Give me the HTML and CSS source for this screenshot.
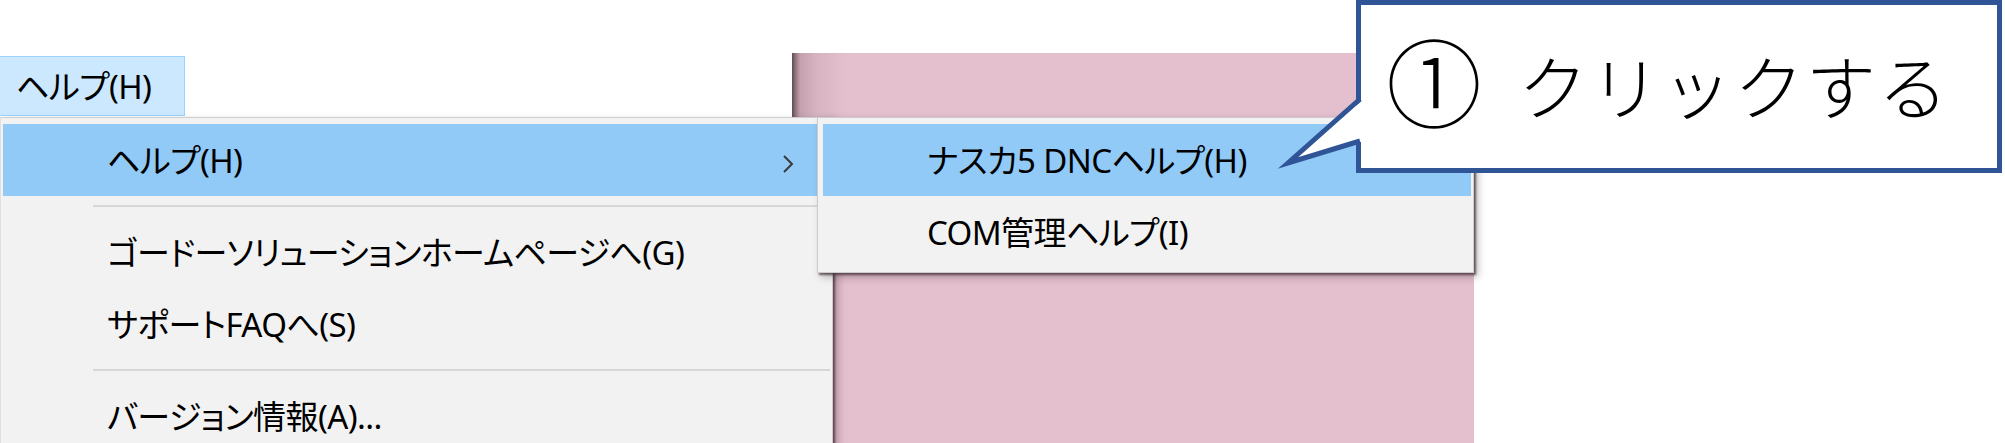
FILE: index.html
```html
<!DOCTYPE html>
<html lang="ja">
<head>
<meta charset="utf-8">
<title>ヘルプメニュー</title>
<link rel="stylesheet" href="styles.css">
</head>
<body>
<div class="screen">
  <div class="menubar">
    <div class="menubar-item">ヘルプ(H)</div>
  </div>

  <div class="window"></div>

  <div class="menu dropdown">
    <div class="item active">
      <span class="label">ヘルプ(H)</span>
      <svg class="chev" width="14" height="20" viewBox="0 0 14 20"><path d="M3 2 L11 10 L3 18" fill="none" stroke="#3a3a3a" stroke-width="2"/></svg>
    </div>
    <div class="sep"><div class="sep-line"></div></div>
    <div class="item"><span class="label">ゴードーソリューションホームページへ(G)</span></div>
    <div class="item"><span class="label">サポートFAQへ(S)</span></div>
    <div class="sep"><div class="sep-line"></div></div>
    <div class="item"><span class="label">バージョン情報(A)...</span></div>
  </div>

  <div class="menu submenu">
    <div class="item active">
      <span class="label">ナスカ5 DNCヘルプ(H)</span>
    </div>
    <div class="item"><span class="label">COM管理ヘルプ(I)</span></div>
  </div>

  <div class="callout">
    <div class="callout-box">
      <span class="num">①</span><span class="msg">クリックする</span>
    </div>
    <svg class="tail" width="100" height="90" viewBox="1270 88 100 90">
      <polygon points="1364,99 1288,163 1364,141" fill="#ffffff"/>
      <polyline points="1360,99 1288,163 1360,141" fill="none" stroke="#2f5597" stroke-width="5" stroke-linejoin="miter" stroke-miterlimit="10"/>
    </svg>
  </div>
</div>
</body>
</html>
```

FILE: styles.css
```css
* {
  box-sizing: border-box;
  margin: 0;
  padding: 0;
}

html, body {
  width: 2005px;
  height: 443px;
  overflow: hidden;
  background: #ffffff;
}

body {
  font-family: "Noto Sans", "Noto Sans CJK JP", sans-serif;
  color: #000000;
}

.screen {
  position: relative;
  width: 2005px;
  height: 443px;
  overflow: hidden;
}

.menubar {
  display: flex;
  padding-top: 56px;
}

.menubar-item {
  width: 185px;
  height: 60px;
  background: #cce8ff;
  border: 1px solid #99d1ff;
  border-left: none;
  display: flex;
  align-items: center;
  padding-left: 16px;
  font-size: 33px;
  font-feature-settings: "palt";
  line-height: 1;
  letter-spacing: -0.6px;
}

.window {
  position: absolute;
  left: 792px;
  top: 53px;
  width: 682px;
  height: 400px;
  background: linear-gradient(to right, #5e4a52 0, #8a6e78 3px, #c4a0ae 8px, #d8b3c2 25px, #e4bfcd 55px);
}

.menu {
  position: absolute;
  background: #f2f2f2;
  border: 1px solid #cccccc;
  box-shadow: 2px 2px 2px rgba(70, 45, 55, 0.75), 4px 4px 8px rgba(0, 0, 0, 0.25);
}

.dropdown {
  left: 0;
  top: 117px;
  width: 833px;
  height: 345px;
  padding: 6px 2px 0 2px;
  border-left-color: #e0e0e0;
}

.submenu {
  left: 817px;
  top: 117px;
  width: 657px;
  height: 156px;
  padding: 6px 2px 4px 5px;
}

.item {
  height: 72px;
  display: flex;
  align-items: center;
  padding-left: 104px;
  font-size: 33px;
  font-feature-settings: "palt";
  line-height: 1;
  letter-spacing: -0.6px;
  white-space: nowrap;
}

.item.active {
  background: #91c9f7;
}

.chev {
  margin-left: auto;
  margin-right: 35px;
  margin-top: 8px;
}

.sep {
  height: 20px;
  display: flex;
  align-items: center;
  padding-left: 90px;
}

.sep-line {
  height: 2px;
  width: 100%;
  background: #d7d7d7;
}

.callout {
  position: absolute;
  left: 0;
  top: 0;
  width: 0;
  height: 0;
}

.callout-box {
  position: absolute;
  left: 1356px;
  top: 0;
  width: 646px;
  height: 173px;
  background: #ffffff;
  border: 5px solid #2f5597;
  display: flex;
  align-items: center;
  padding-left: 25px;
  padding-bottom: 4px;
  font-family: "Noto Sans CJK JP", sans-serif;
  font-size: 70px;
  line-height: 1;
  font-weight: 300;
}

.num {
  font-size: 96px;
  font-weight: 300;
  margin-bottom: 12px;
}

.msg {
  margin-left: 36px;
  letter-spacing: 2px;
}

.tail {
  position: absolute;
  left: 1270px;
  top: 88px;
}
```
